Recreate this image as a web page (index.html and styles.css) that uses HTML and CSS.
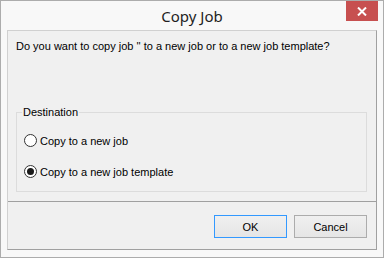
FILE: index.html
```html
<!DOCTYPE html>
<html lang="en">
<head>
  <meta charset="UTF-8" />
  <meta name="viewport" content="width=device-width,initial-scale=1" />
  <title>Copy Job</title>
  <link rel="stylesheet" href="styles.css">
</head>
<body>
  <div class="window">
    <div class="titlebar">
      <span class="title">Copy Job</span>
      <div class="close">
        <svg width="10" height="9" viewBox="0 0 10 9">
          <path d="M1 0.5 L9 8.5 M9 0.5 L1 8.5" stroke="#fff" stroke-width="2" />
        </svg>
      </div>
    </div>

    <div class="client">
      <div class="content">
        <p class="message">Do you want to copy job '' to a new job or to a new job template?</p>
        <fieldset class="group">
          <legend>Destination</legend>
          <label class="radio">
            <span class="dot"></span>
            Copy to a new job
          </label>
          <label class="radio checked">
            <span class="dot"></span>
            Copy to a new job template
          </label>
        </fieldset>
      </div>
      <div class="buttons">
        <button class="btn btn-default">OK</button>
        <button class="btn">Cancel</button>
      </div>
    </div>
  </div>
</body>
</html>
```

FILE: styles.css
```css
:root {
  --frame: #f8f8f8;
  --face: #f0f0f0;
  --text: #000;
  --line: #a0a0a0;
  --group: #dcdcdc;
}
* { box-sizing: border-box; margin: 0; padding: 0 }
html, body {
  width: 384px; height: 258px; overflow: hidden;
  font-family: "Liberation Sans", Arial, sans-serif;
  font-size: 11px; color: var(--text);
}

.window {
  width: 384px; height: 258px;
  display: flex; flex-direction: column;
  border: 1px solid #acacac;
  background: var(--frame);
}

.titlebar {
  height: 29px; position: relative;
  display: flex; align-items: center; justify-content: center;
}
.title { font-family: "Noto Sans", sans-serif; font-size: 15px; color: #1e1e1e; padding-top: 1px }
.close {
  position: absolute; right: 5px; top: 0;
  width: 32px; height: 20px;
  background: #c75050;
  display: flex; align-items: center; justify-content: center;
}

.client {
  flex: 1;
  margin: 0 6px 7px 6px;
  display: flex; flex-direction: column;
  background: var(--face);
  border: 1px solid var(--line);
  border-top-color: #d0d0d0; border-left-color: #d0d0d0;
}

.content {
  flex: 1;
  padding: 8px 9px 9px 8px;
  border-bottom: 1px solid var(--line);
  display: flex; flex-direction: column;
}
.message { line-height: 15px }

.group {
  margin-top: auto;
  border: 1px solid var(--group);
  padding: 6px 7px 2px 7px;
  height: 87px;
}
.group legend { padding: 0 1px; margin-left: -2px; line-height: 14px }

.radio {
  display: flex; align-items: center; gap: 3px;
  height: 31px;
}
.dot {
  width: 13px; height: 13px; border-radius: 50%;
  border: 1px solid #333; background: #fff;
  display: flex; align-items: center; justify-content: center;
}
.checked .dot::after {
  content: ""; width: 7px; height: 7px; border-radius: 50%; background: #1a1a1a;
}

.buttons {
  height: 47px;
  display: flex; justify-content: flex-end; align-items: flex-start; gap: 7px;
  padding: 13px 9px 0 0;
}
.btn {
  width: 73px; height: 23px;
  font: inherit; color: var(--text);
  border: 1px solid #acacac;
  background: linear-gradient(#f0f0f0, #e5e5e5);
}
.btn-default { border-color: #3399ff }
```
